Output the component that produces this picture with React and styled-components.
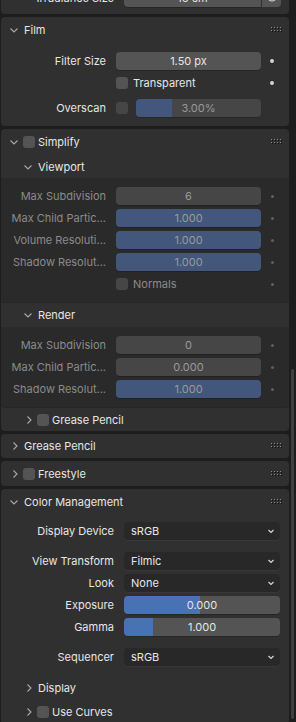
import styled, { createGlobalStyle } from 'styled-components';

const GlobalStyle = createGlobalStyle`
    html, body {
        margin: 0;
        padding: 0;
        background-color: #1d1d1d;
    }
    body {
        font-family: Inter, "DejaVu Sans", sans-serif;
        -webkit-font-smoothing: antialiased;
    }
`;

const colors = {
    panel: '#303030',
    subBody: '#2a2a2a',
    field: '#545454',
    fieldDim: '#464646',
    fill: '#4772b3',
    fillDim: '#42577b',
    text: '#e6e6e6',
    textDim: '#8a8a8a',
    valueDim: '#999999',
    menu: '#282828',
};

const Screen = styled('div')`
    position: relative;
    width: 296px;
    height: 722px;
    overflow: hidden;
    padding: 0 7px 0 1px;
    box-sizing: border-box;
    display: flex;
    flex-direction: column;
    gap: 3px;
`;

const Scrollbar = styled('div')`
    position: absolute;
    right: 2px;
    top: 369px;
    width: 3px;
    height: 350px;
    border-radius: 2px;
    background-color: #404040;
`;

const Panel = styled('div')`
    flex-shrink: 0;
    background-color: ${colors.panel};
    border-radius: 4px;
    overflow: hidden;
    ${({ $cut }) => $cut && `
        height: 14px;
        border-radius: 0 0 4px 4px;
    `}
`;

const Header = styled('div')`
    display: flex;
    align-items: center;
    height: ${({ $h }) => $h || 26}px;
    padding-left: ${({ $sub }) => ($sub ? 19 : 5)}px;
    padding-right: 6px;
    color: ${colors.text};
    font-size: 11px;
    white-space: nowrap;
`;

const HeaderTitle = styled('span')`
    margin-left: ${({ $afterBox }) => ($afterBox ? 3 : 2)}px;
`;

const ChevronBox = styled('div')`
    width: 16px;
    height: 16px;
    flex-shrink: 0;
`;

const Grip = styled('svg')`
    margin-left: auto;
    width: 12px;
    height: 6px;
`;

const SubBody = styled('div')`
    background-color: ${colors.subBody};
    border-radius: 0 0 4px 4px;
    border-bottom: 1px solid #262626;
    padding: 9px 0;
    display: flex;
    flex-direction: column;
    gap: 4px;
`;

const Body = styled('div')`
    padding: ${({ $pad }) => $pad || '9px 0'};
    display: flex;
    flex-direction: column;
`;

const Row = styled('div')`
    display: grid;
    grid-template-columns: ${({ $wide }) => ($wide ? '113px 1fr' : '105px 145px 22px')};
    align-items: center;
    height: 18px;
    padding: 0 ${({ $wide }) => ($wide ? 9 : 7)}px 0 10px;
    margin-top: ${({ $mt }) => $mt || 0}px;
`;

const Label = styled('div')`
    padding-right: 10px;
    text-align: right;
    font-size: 11px;
    color: ${({ $dim }) => ($dim ? colors.textDim : colors.text)};
    white-space: nowrap;
    overflow: hidden;
`;

const Field = styled('div')`
    height: 18px;
    border-radius: 4px;
    display: flex;
    align-items: center;
    justify-content: center;
    flex: 1;
    font-size: 11px;
    color: ${({ $dim }) => ($dim ? colors.valueDim : colors.text)};
    box-shadow: 0 1px 0 rgba(0, 0, 0, 0.2);
    background: ${({ $dim, $fill }) => {
        const bg = $dim ? colors.fieldDim : colors.field;
        const fill = $dim ? colors.fillDim : colors.fill;
        if ($fill == null) return bg;
        return `linear-gradient(to right, ${fill} ${$fill}%, ${bg} ${$fill}%)`;
    }};
    ${({ $left }) => $left && 'border-radius: 4px 0 0 4px;'}
`;

const IconButton = styled('div')`
    height: 18px;
    margin-left: 1px;
    border-radius: 0 4px 4px 0;
    background-color: ${colors.field};
    display: flex;
    justify-content: center;
`;

const Menu = styled('div')`
    height: 18px;
    border-radius: 4px;
    background-color: ${colors.menu};
    box-shadow: 0 1px 0 rgba(255, 255, 255, 0.04);
    display: flex;
    align-items: center;
    justify-content: space-between;
    padding: 0 4px 0 7px;
    font-size: 11px;
    color: ${colors.text};
`;

const Check = styled('div')`
    width: 12px;
    height: 12px;
    border-radius: 3px;
    flex-shrink: 0;
    background-color: ${({ $dim }) => ($dim ? colors.fieldDim : colors.field)};
    margin-left: ${({ $ml }) => $ml || 0}px;
`;

const CheckCell = styled('div')`
    display: flex;
    align-items: center;
    gap: ${({ $gap }) => $gap || 5}px;
    font-size: 11px;
    color: ${({ $dim }) => ($dim ? colors.textDim : colors.text)};
`;

const Decorator = styled('div')`
    display: flex;
    justify-content: center;
    &::after {
        content: '';
        width: ${({ $dim }) => ($dim ? 3 : 4)}px;
        height: ${({ $dim }) => ($dim ? 3 : 4)}px;
        border-radius: 50%;
        background-color: ${({ $dim }) => ($dim ? '#5e5e5e' : '#d4d4d4')};
    }
`;

const Spacer = styled('div')``;

const Gap = styled('div')`
    height: ${({ $h }) => $h}px;
`;

function Chevron({ open }) {
    return (
        <ChevronBox>
            <svg width="16" height="16" viewBox="0 0 16 16">
                {open ? (
                    <path d="M4.5 6.5 L8 10 L11.5 6.5" fill="none" stroke="#a8a8a8" strokeWidth="1.1" />
                ) : (
                    <path d="M7.5 4.5 L11 8 L7.5 11.5" fill="none" stroke="#a8a8a8" strokeWidth="1.1" />
                )}
            </svg>
        </ChevronBox>
    );
}

function GripIcon() {
    const dots = [];
    for (let i = 0; i < 4; i++) {
        for (let j = 0; j < 2; j++) {
            dots.push(<rect key={`l${i}${j}`} x={i * 3} y={j * 3} width="1" height="1" fill="#8c8c8c" />);
            dots.push(<rect key={`d${i}${j}`} x={i * 3 + 1} y={j * 3 + 1} width="1" height="1" fill="#101010" />);
        }
    }
    return (
        <Grip viewBox="0 0 12 6">
            {dots}
        </Grip>
    );
}

function MenuArrow() {
    return (
        <svg width="10" height="10" viewBox="0 0 10 10">
            <path d="M2.5 4 L5 6.5 L7.5 4" fill="none" stroke="#d8d8d8" strokeWidth="1.2" />
        </svg>
    );
}

function PanelHead({ title, open, check, h, sub, grip }) {
    return (
        <Header $h={h} $sub={sub}>
            <Chevron open={open} />
            {check && <Check $ml={1} />}
            <HeaderTitle $afterBox={check}>{title}</HeaderTitle>
            {grip && <GripIcon />}
        </Header>
    );
}

function PropRow({ label, value, fill, dim, mt }) {
    return (
        <Row $mt={mt}>
            <Label $dim={dim}>{label}</Label>
            <Field $dim={dim} $fill={fill}>{value}</Field>
            <Decorator $dim={dim} />
        </Row>
    );
}

function MenuRow({ label, value, mt }) {
    return (
        <Row $wide $mt={mt}>
            <Label>{label}</Label>
            <Menu>
                <span>{value}</span>
                <MenuArrow />
            </Menu>
        </Row>
    );
}

function SliderRow({ label, value, fill, mt }) {
    return (
        <Row $wide $mt={mt}>
            <Label>{label}</Label>
            <Field $fill={fill}>{value}</Field>
        </Row>
    );
}

export default function App() {
    return (
        <>
            <GlobalStyle />
            <Screen>
                <Panel $cut>
                    <Row $wide style={{ gridTemplateColumns: '113px 137px 20px', marginTop: -11 }}>
                        <Label>Irradiance Size</Label>
                        <Field $left>16 cm</Field>
                        <IconButton>
                            <svg width="12" height="18" viewBox="0 0 12 18">
                                <circle cx="6" cy="8" r="4" fill="none" stroke="#d0d0d0" strokeWidth="1.2" />
                            </svg>
                        </IconButton>
                    </Row>
                </Panel>

                <Panel>
                    <PanelHead title="Film" open grip />
                    <Body>
                        <PropRow label="Filter Size" value="1.50 px" />
                        <Row $mt={4}>
                            <Spacer />
                            <CheckCell>
                                <Check />
                                Transparent
                            </CheckCell>
                            <Decorator />
                        </Row>
                        <Row $mt={7}>
                            <Label>Overscan</Label>
                            <CheckCell $gap={8}>
                                <Check $dim />
                                <Field $dim $fill={29}>3.00%</Field>
                            </CheckCell>
                            <Spacer />
                        </Row>
                    </Body>
                </Panel>

                <Panel>
                    <PanelHead title="Simplify" open check grip />
                    <PanelHead title="Viewport" open sub h={23} />
                    <SubBody>
                        <PropRow dim label="Max Subdivision" value="6" />
                        <PropRow dim label="Max Child Partic..." value="1.000" fill={100} />
                        <PropRow dim label="Volume Resoluti..." value="1.000" fill={100} />
                        <PropRow dim label="Shadow Resolut..." value="1.000" fill={100} />
                        <Row>
                            <Spacer />
                            <CheckCell $dim>
                                <Check $dim />
                                Normals
                            </CheckCell>
                            <Decorator $dim />
                        </Row>
                    </SubBody>
                    <PanelHead title="Render" open sub h={24} />
                    <SubBody>
                        <PropRow dim label="Max Subdivision" value="0" />
                        <PropRow dim label="Max Child Partic..." value="0.000" />
                        <PropRow dim label="Shadow Resolut..." value="1.000" fill={100} />
                    </SubBody>
                    <PanelHead title="Grease Pencil" check sub h={23} />
                </Panel>

                <Panel>
                    <PanelHead title="Grease Pencil" h={24} grip />
                </Panel>

                <Panel>
                    <PanelHead title="Freestyle" check h={25} grip />
                </Panel>

                <Panel>
                    <PanelHead title="Color Management" open h={25} grip />
                    <Body $pad="8px 0 0">
                        <MenuRow label="Display Device" value="sRGB" />
                        <MenuRow label="View Transform" value="Filmic" mt={12} />
                        <MenuRow label="Look" value="None" mt={4} />
                        <SliderRow label="Exposure" value="0.000" fill={49} mt={4} />
                        <SliderRow label="Gamma" value="1.000" fill={18.5} mt={4} />
                        <MenuRow label="Sequencer" value="sRGB" mt={12} />
                    </Body>
                    <Gap $h={10} />
                    <PanelHead title="Display" sub h={24} />
                    <PanelHead title="Use Curves" check sub h={24} />
                </Panel>

                <Scrollbar />
            </Screen>
        </>
    );
}
